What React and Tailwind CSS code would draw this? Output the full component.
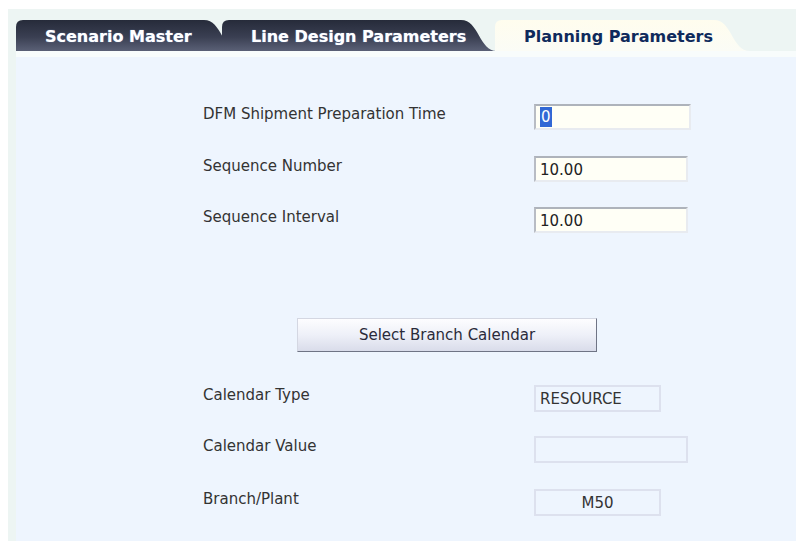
import React from 'react'

const FONT = { fontFamily: '"DejaVu Sans", Verdana, sans-serif' }

// tab silhouette: rounded top-left, s-curve slope down on the right
function TabShape({ w, h = 31, active }) {
  const d = `M0 ${h} V7 Q0 0 7 0 H${w - 36} C${w - 18} 0 ${w - 18} ${h} ${w} ${h} Z`
  const id = active ? 'tabOn' : 'tabOff'
  return (
    <svg className="absolute inset-0" width={w} height={h} viewBox={`0 0 ${w} ${h}`}>
      <defs>
        <linearGradient id={id} x1="0" y1="0" x2="0" y2="1">
          {active ? (
            <>
              <stop offset="0" stopColor="#fffdee" />
              <stop offset="1" stopColor="#fbfcf6" />
            </>
          ) : (
            <>
              <stop offset="0" stopColor="#262b3a" />
              <stop offset="0.55" stopColor="#3a3f52" />
              <stop offset="1" stopColor="#5a6076" />
            </>
          )}
        </linearGradient>
      </defs>
      <path d={d} fill={`url(#${id})`} />
    </svg>
  )
}

function Tab({ label, w, active, className = '' }) {
  return (
    <div className={`relative h-[31px] shrink-0 ${className}`} style={{ width: w }}>
      <TabShape w={w} active={active} />
      <span
        className={`relative block whitespace-nowrap pl-[29px] pt-[7px] text-[16px] font-bold leading-[19px] ${
          active ? 'text-[#0f2a5c]' : 'text-white [text-shadow:0_0_1px_#8fb0e0]'
        }`}
      >
        {label}
      </span>
    </div>
  )
}

function EditBox({ value, w = 154, selected }) {
  return (
    <div
      className="flex h-[26px] items-center border-2 border-t-[#aeb3bb] border-l-[#b8bcc4] border-r-[#e8ebf0] border-b-[#e8ebf0] bg-[#fffff6] pl-[4px] pt-[2px] text-[15px] text-[#222]"
      style={{ width: w }}
    >
      {selected ? (
        <span className="-mt-[2px] bg-[#3168d5] px-[1px] leading-[20px] text-white">{value}</span>
      ) : (
        value
      )}
    </div>
  )
}

function ReadBox({ value, w = 127, center }) {
  return (
    <div
      className={`flex h-[27px] items-center border-2 border-[#dde1ee] pt-[1px] text-[15px] text-[#333] ${
        center ? 'justify-center' : 'pl-[4px]'
      }`}
      style={{ width: w }}
    >
      {value}
    </div>
  )
}

function Row({ label, children, className = '' }) {
  return (
    <div className={`flex items-start ${className}`}>
      <div className="w-[331px] pt-[1px] text-[15px] leading-[18px] text-[#333]">{label}</div>
      {children}
    </div>
  )
}

export default function App() {
  return (
    <div className="h-[541px] w-[796px] overflow-hidden bg-white pl-[8px] pt-[9px]" style={FONT}>
      <div className="h-full bg-[#edf5f3] pl-[8px] pt-[11px]">
        <div className="flex">
          <Tab label="Scenario Master" w={224} className="z-10" />
          <Tab label="Line Design Parameters" w={275} className="-ml-[18px]" />
          <Tab label="Planning Parameters" w={255} active className="-ml-[2px]" />
        </div>
        <div className="h-[6px] bg-[#f8fcfc]" />
        <div className="h-full bg-[#eef5fe] pl-[187px] pt-[47px]">
          <Row label="DFM Shipment Preparation Time">
            <EditBox value="0" w={157} selected />
          </Row>
          <Row label="Sequence Number" className="mt-[26px]">
            <EditBox value="10.00" />
          </Row>
          <Row label="Sequence Interval" className="mt-[25px]">
            <EditBox value="10.00" />
          </Row>

          <button className="ml-[94px] mt-[85px] block h-[34px] w-[300px] border border-t-[#d4d7e2] border-l-[#d4d7e2] border-r-[#6f7485] border-b-[#6f7485] bg-gradient-to-b from-[#fdfdff] via-[#eef0f8] to-[#d9dcea] text-[15px] text-[#2a2a3a]">
            Select Branch Calendar
          </button>

          <Row label="Calendar Type" className="mt-[33px]">
            <ReadBox value="RESOURCE" />
          </Row>
          <Row label="Calendar Value" className="mt-[24px]">
            <ReadBox value="" w={154} />
          </Row>
          <Row label="Branch/Plant" className="mt-[26px]">
            <ReadBox value="M50" center />
          </Row>
        </div>
      </div>
    </div>
  )
}
